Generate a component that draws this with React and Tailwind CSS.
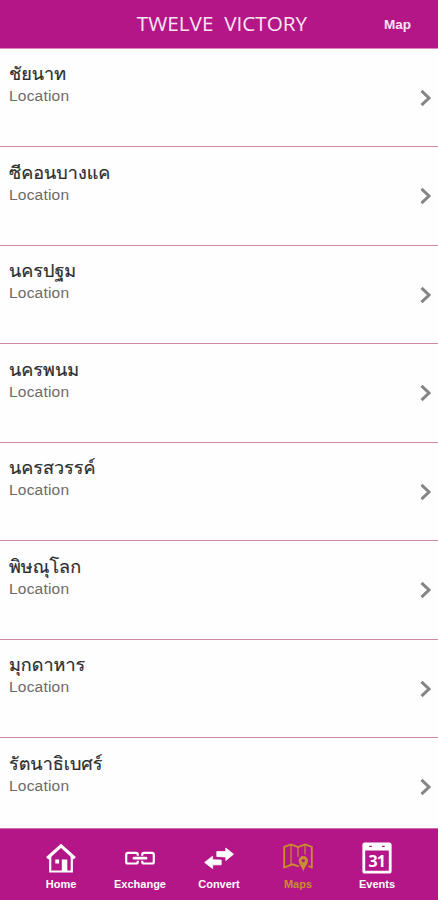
import React from 'react';

const locations = [
  'ชัยนาท',
  'ซีคอนบางแค',
  'นครปฐม',
  'นครพนม',
  'นครสวรรค์',
  'พิษณุโลก',
  'มุกดาหาร',
  'รัตนาธิเบศร์',
];

const HomeIcon = () => (
  <svg width="30" height="30" viewBox="0 0 30 30" fill="none" stroke="currentColor" strokeWidth="2.2">
    <path d="M1.2 15.3 15 2.9l13.800 12.400" strokeWidth="3.2" />
    <path d="M4.200 13v15.500h21.600V13" />
    <path d="M15.800 16.500h5.500v12h-5.500z" fill="currentColor" stroke="none" />
    <path d="M9.300 16.500h3.800v4H9.300z" fill="currentColor" stroke="none" />
  </svg>
);

const LinkIcon = () => (
  <svg width="30" height="30" viewBox="0 0 30 30" fill="none" stroke="currentColor" strokeWidth="2.2">
    <path d="M12.800 12.700v-1A1.800 1.800 0 0 0 11 9.900H3a1.800 1.800 0 0 0-1.800 1.800v7A1.800 1.800 0 0 0 3 20.500h8a1.800 1.800 0 0 0 1.800-1.800v-1" />
    <path d="M17.200 12.700v-1A1.800 1.800 0 0 1 19 9.900h8a1.800 1.800 0 0 1 1.800 1.800v7a1.800 1.800 0 0 1-1.800 1.800h-8a1.800 1.800 0 0 1-1.800-1.800v-1" />
    <path d="M9 15.200h12" strokeLinecap="round" strokeWidth="2.700" />
  </svg>
);

const ConvertIcon = () => (
  <svg width="30" height="30" viewBox="0 0 30 30" fill="currentColor" stroke="currentColor" strokeWidth="0.8" strokeLinejoin="round">
    <path d="M29.500 11.200 21.800 5v3.600h-9v4.900l9 .4v3.600z" />
    <path d="M.6 19.400 8.600 13.200v3.600l8.600.3v4.700H8.600v3.800z" />
  </svg>
);

const MapIcon = () => (
  <svg width="30" height="30" viewBox="0 0 30 30" fill="none" stroke="currentColor" strokeWidth="1.8">
    <path d="M16 23.500 15 23.200 9.500 21.300 1.200 24.500V4l6.800-2.500 7 2.500 7-2.500L28.800 4v20.500l-3.500-1.500" />
    <path d="M8 2v19.500M15 4v10M22 2v9.500" strokeWidth="1.200" />
    <path
      d="M20.300 13a4.700 4.700 0 0 0-4.700 4.700c0 3.300 3.300 5.500 4.700 11 1.400-5.500 4.700-7.700 4.700-11a4.700 4.700 0 0 0-4.700-4.700zm0 2.900a1.700 1.700 0 1 1 0 3.400 1.700 1.700 0 0 1 0-3.400z"
      fill="currentColor"
      fillRule="evenodd"
      stroke="none"
    />
  </svg>
);

const CalendarIcon = () => (
  <svg width="30" height="32" viewBox="0 0 30 32">
    <path
      d="M3 .5h24a2.600 2.600 0 0 1 2.600 2.600v25.800a2.600 2.600 0 0 1-2.600 2.600H3a2.600 2.600 0 0 1-2.600-2.600V3.100A2.600 2.600 0 0 1 3 .5zM3.200 8.500v20.200h23.600V8.500z"
      fill="currentColor"
      fillRule="evenodd"
    />
    <path d="M7.700 4.300h1.800M20.500 4.300h1.800" stroke="#b41688" strokeWidth="1.300" strokeLinecap="round" />
    <text x="14.800" y="24.600" textAnchor="middle" fill="currentColor" fontFamily="Open Sans" fontWeight="700" fontSize="16" letterSpacing="-0.800">
      31
    </text>
  </svg>
);

const tabs = [
  { label: 'Home', icon: HomeIcon },
  { label: 'Exchange', icon: LinkIcon },
  { label: 'Convert', icon: ConvertIcon },
  { label: 'Maps', icon: MapIcon, active: true },
  { label: 'Events', icon: CalendarIcon },
];

const LocationRow = ({ name }) => (
  <li className="flex h-[98.5px] items-start justify-between border-b border-[#cf8aa3] pl-[9px] pr-[5px]">
    <div className="pt-[13.5px]">
      <p className="h-[24px] whitespace-nowrap font-['Loma','Noto_Sans_Thai','Noto_Sans',sans-serif] text-[18px] leading-[24px] text-[#2c2c2c] [-webkit-text-stroke:0.2px_#2c2c2c]">
        {name}
      </p>
      <p className="font-['Liberation_Sans',sans-serif] text-[15.5px] leading-[20px] tracking-[0.2px] text-[#6b6b6b]">
        Location
      </p>
    </div>
    <svg className="mt-[40px]" width="14" height="18" viewBox="0 0 14 18" fill="none" stroke="#858585" strokeWidth="3">
      <path d="M2.500 1.800 10 9l-7.500 7.200" />
    </svg>
  </li>
);

const App = () => (
  <div className="flex h-[900px] w-full flex-col overflow-hidden bg-[#fefefe]">
    <header className="grid h-[48.5px] shrink-0 grid-cols-[1fr_auto_1fr] items-center border-b border-[#dc86c4] bg-[#b41688] text-white">
      <span />
      <h1 className="ml-[6px] whitespace-pre font-['Open_Sans',sans-serif] text-[20.7px] font-normal text-[#fbe6f5]">
        TWELVE  VICTORY
      </h1>
      <button
        type="button"
        className="mr-[27px] justify-self-end pt-[2px] font-['Liberation_Sans',sans-serif] text-[13.5px] font-bold text-[#fbe6f5]"
      >
        Map
      </button>
    </header>

    <ul className="min-h-0 flex-1 overflow-hidden">
      {locations.map((name) => (
        <LocationRow key={name} name={name} />
      ))}
    </ul>

    <nav className="flex h-[72px] shrink-0 justify-center border-t border-[#cf6fb3] bg-[#b41688] pt-[13px]">
      {tabs.map(({ label, icon: Icon, active }) => (
        <button
          key={label}
          type="button"
          className={`flex w-[79px] flex-col items-center ${active ? 'text-[#c98f2b]' : 'text-white'}`}
        >
          <span className="flex h-[32px] items-center">
            <Icon />
          </span>
          <span className="mt-[3px] font-['Liberation_Sans',sans-serif] text-[11px] font-bold leading-[14px]">{label}</span>
        </button>
      ))}
    </nav>
  </div>
);

export default App;
